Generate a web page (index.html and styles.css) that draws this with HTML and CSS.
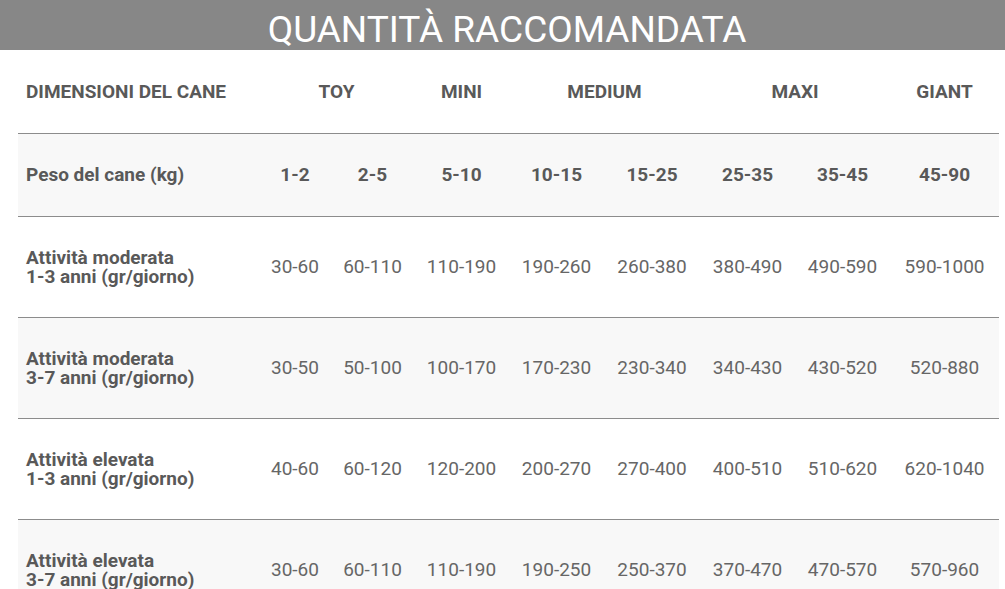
FILE: index.html
```html
<!DOCTYPE html>
<html lang="it">
<head>
<meta charset="utf-8">
<title>Quantità raccomandata</title>
<link rel="stylesheet" href="styles.css">
</head>
<body>
<header class="band">
  <h1 class="title">QUANTITÀ RACCOMANDATA</h1>
</header>
<table class="dose">
  <colgroup>
    <col class="c-label">
    <col class="c1"><col class="c2"><col class="c3"><col class="c4">
    <col class="c5"><col class="c6"><col class="c7"><col class="c8">
  </colgroup>
  <tr class="row-head">
    <th class="label">DIMENSIONI DEL CANE</th>
    <th colspan="2">TOY</th>
    <th>MINI</th>
    <th colspan="2">MEDIUM</th>
    <th colspan="2">MAXI</th>
    <th>GIANT</th>
  </tr>
  <tr class="row-weight alt">
    <th class="label">Peso del cane (kg)</th>
    <th>1-2</th><th>2-5</th><th>5-10</th><th>10-15</th><th>15-25</th><th>25-35</th><th>35-45</th><th>45-90</th>
  </tr>
  <tr class="row-data">
    <th class="label">Attività moderata<br>1-3 anni (gr/giorno)</th>
    <td>30-60</td><td>60-110</td><td>110-190</td><td>190-260</td><td>260-380</td><td>380-490</td><td>490-590</td><td>590-1000</td>
  </tr>
  <tr class="row-data alt">
    <th class="label">Attività moderata<br>3-7 anni (gr/giorno)</th>
    <td>30-50</td><td>50-100</td><td>100-170</td><td>170-230</td><td>230-340</td><td>340-430</td><td>430-520</td><td>520-880</td>
  </tr>
  <tr class="row-data">
    <th class="label">Attività elevata<br>1-3 anni (gr/giorno)</th>
    <td>40-60</td><td>60-120</td><td>120-200</td><td>200-270</td><td>270-400</td><td>400-510</td><td>510-620</td><td>620-1040</td>
  </tr>
  <tr class="row-data alt">
    <th class="label">Attività elevata<br>3-7 anni (gr/giorno)</th>
    <td>30-60</td><td>60-110</td><td>110-190</td><td>190-250</td><td>250-370</td><td>370-470</td><td>470-570</td><td>570-960</td>
  </tr>
</table>
</body>
</html>
```
FILE: styles.css
```css
html, body {
  margin: 0;
  padding: 0;
  background: #ffffff;
  font-family: Roboto, "Liberation Sans", sans-serif;
}
.band {
  background: #878787;
  height: 50px;
  overflow: hidden;
  text-align: center;
}
.title {
  margin: 0;
  padding-top: 11px;
  padding-left: 9px;
  font-size: 37px;
  line-height: 1;
  font-weight: 400;
  color: #ffffff;
}
.dose {
  margin-left: 18px;
  width: 981px;
  table-layout: fixed;
  border-collapse: collapse;
  color: #595959;
}
.c-label { width: 241px; }
.c1 { width: 72px; }
.c2 { width: 83px; }
.c3 { width: 95px; }
.c4 { width: 95px; }
.c5 { width: 96px; }
.c6 { width: 95px; }
.c7 { width: 95px; }
.c8 { width: 109px; }
.dose th, .dose td {
  padding: 0;
  text-align: center;
  vertical-align: middle;
  font-size: 19px;
  line-height: 19px;
  white-space: nowrap;
}
.dose th { font-weight: 700; }
.dose td { font-weight: 400; color: #666666; }
.dose th.label {
  text-align: left;
  padding-left: 8px;
}
.dose tr { border-bottom: 1px solid #8c8c8c; }
.row-head, .row-weight { height: 83px; }
.row-data { height: 101px; }
.alt { background: #f8f8f8; }
```
